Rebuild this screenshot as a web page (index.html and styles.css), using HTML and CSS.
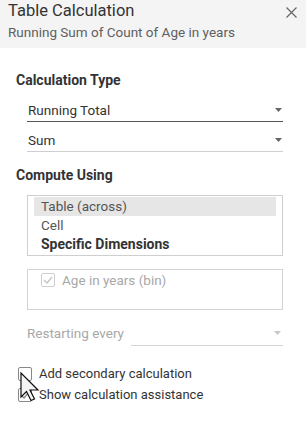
FILE: index.html
```html
<!DOCTYPE html>
<html>
<head>
<meta charset="utf-8">
<link rel="stylesheet" href="styles.css">
</head>
<body>
<div class="panel">
  <header class="header">
    <div class="titles">
      <div class="title">Table Calculation</div>
      <div class="subtitle">Running Sum of Count of Age in years</div>
    </div>
    <svg class="close" width="11" height="11" viewBox="0 0 11 11"><path d="M0.5 0.5 L10.5 10.5 M10.5 0.5 L0.5 10.5" stroke="#666" stroke-width="1.2" fill="none"/></svg>
  </header>
  <main class="content">
    <div class="section-title first">Calculation Type</div>
    <div class="select dark">
      <span class="select-text">Running Total</span>
      <svg class="caret" width="7" height="4" viewBox="0 0 7 4"><path d="M0 0 H7 L3.5 4 Z" fill="#666"/></svg>
    </div>
    <div class="select">
      <span class="select-text">Sum</span>
      <svg class="caret" width="7" height="4" viewBox="0 0 7 4"><path d="M0 0 H7 L3.5 4 Z" fill="#666"/></svg>
    </div>
    <div class="section-title second">Compute Using</div>
    <ul class="listbox">
      <li class="item selected">Table (across)</li>
      <li class="item">Cell</li>
      <li class="item bold">Specific Dimensions</li>
    </ul>
    <div class="dims">
      <div class="dim-row">
        <span class="box disabled"><svg width="10" height="8" viewBox="0 0 10 8"><path d="M1 4 L4 7 L9 1" stroke="#c4c4c4" stroke-width="1.3" fill="none"/></svg></span>
        <span class="dim-label">Age in years (bin)</span>
      </div>
    </div>
    <div class="restart">
      <span class="restart-label">Restarting every</span>
      <div class="restart-select">
        <svg class="caret" width="7" height="4" viewBox="0 0 7 4"><path d="M0 0 H7 L3.5 4 Z" fill="#c8c8c8"/></svg>
      </div>
    </div>
    <div class="checks">
      <div class="check-row">
        <span class="box"></span>
        <span class="check-label">Add secondary calculation</span>
      </div>
      <div class="check-row">
        <span class="box"><svg width="10" height="8" viewBox="0 0 10 8"><path d="M1 4 L4 7 L9 1" stroke="#888" stroke-width="1.4" fill="none"/></svg></span>
        <span class="check-label">Show calculation assistance</span>
      </div>
    </div>
  </main>
  <svg class="cursor" width="20" height="30" viewBox="0 0 20 30"><path d="M1 1 L1 25 L6.5 19.5 L11 28.5 L14.5 27 L10 18 L18 18 Z" fill="#f4f4f4" stroke="#111" stroke-width="1.2" stroke-linejoin="miter"/></svg>
</div>
</body>
</html>
```
FILE: styles.css
```css
* { box-sizing: border-box; }
html, body { margin: 0; padding: 0; background: #fff; }
body {
  font-family: Roboto, "Liberation Sans", sans-serif;
  color: #333;
  width: 306px;
  height: 435px;
  overflow: hidden;
}
.panel { position: relative; width: 306px; height: 435px; }
.header {
  height: 48px;
  background: #f4f4f4;
  display: flex;
  justify-content: space-between;
  align-items: flex-start;
  padding: 0 9px 0 8px;
}
.titles { display: flex; flex-direction: column; }
.title {
  font-size: 16.5px;
  line-height: 20px;
  color: #333;
  margin-top: 1px;
}
.subtitle {
  font-size: 13.5px;
  line-height: 16px;
  color: #5f5f5f;
  margin-top: 3px;
}
.close { margin-top: 7px; }
.content { padding: 0 23px 0 16px; }
.section-title {
  font-size: 14px;
  font-weight: bold;
  line-height: 16px;
  color: #333;
}
.section-title.first { margin-top: 24px; }
.section-title.second { margin-top: 15px; }
.select {
  margin-left: 11px;
  height: 30px;
  border-bottom: 1px solid #cfcfcf;
  display: flex;
  justify-content: space-between;
  align-items: flex-end;
  padding: 0 1px 3px 1px;
}
.select.dark { border-bottom-color: #555; margin-top: 4px; }
.select-text { font-size: 13.5px; line-height: 16px; color: #333; }
.caret { margin-bottom: 6px; }
.listbox {
  list-style: none;
  margin: 12px 0 0 11px;
  padding: 1px 6px 1px 6px;
  border: 1px solid #cfcfcf;
}
.item {
  height: 19px;
  line-height: 19px;
  font-size: 13.5px;
  padding-left: 7px;
  color: #555;
}
.item.selected { background: #e6e6e6; }
.item.bold { font-weight: bold; font-size: 14px; color: #333; }
.dims {
  margin: 13px 0 0 11px;
  height: 41px;
  border: 1px solid #d4d4d4;
  padding: 3px 0 0 13px;
}
.dim-row { display: flex; align-items: center; height: 14px; gap: 7px; }
.dim-label { font-size: 13.5px; line-height: 16px; color: #a8a8a8; }
.box {
  width: 14px;
  height: 14px;
  border: 1px solid #888;
  border-radius: 2px;
  background: #fff;
  display: flex;
  align-items: center;
  justify-content: center;
  flex: none;
}
.box.disabled { border-color: #cfcfcf; }
.restart {
  margin: 9px 0 0 11px;
  height: 27px;
  display: flex;
  align-items: flex-end;
}
.restart-label {
  font-size: 13.5px;
  line-height: 16px;
  color: #a8a8a8;
  margin-bottom: 5px;
}
.restart-select {
  margin-left: auto;
  width: 152px;
  height: 27px;
  border-bottom: 1px solid #d4d4d4;
  display: flex;
  justify-content: flex-end;
  align-items: flex-end;
  padding-right: 2px;
}
.restart-select .caret { margin-bottom: 10px; }
.checks {
  margin: 19px 0 0 2px;
  display: flex;
  flex-direction: column;
  gap: 3px;
}
.check-row { display: flex; align-items: center; height: 18px; gap: 7px; }
.check-label { font-size: 13px; line-height: 18px; color: #333; }
.cursor { position: absolute; left: 20px; top: 372px; }
```
